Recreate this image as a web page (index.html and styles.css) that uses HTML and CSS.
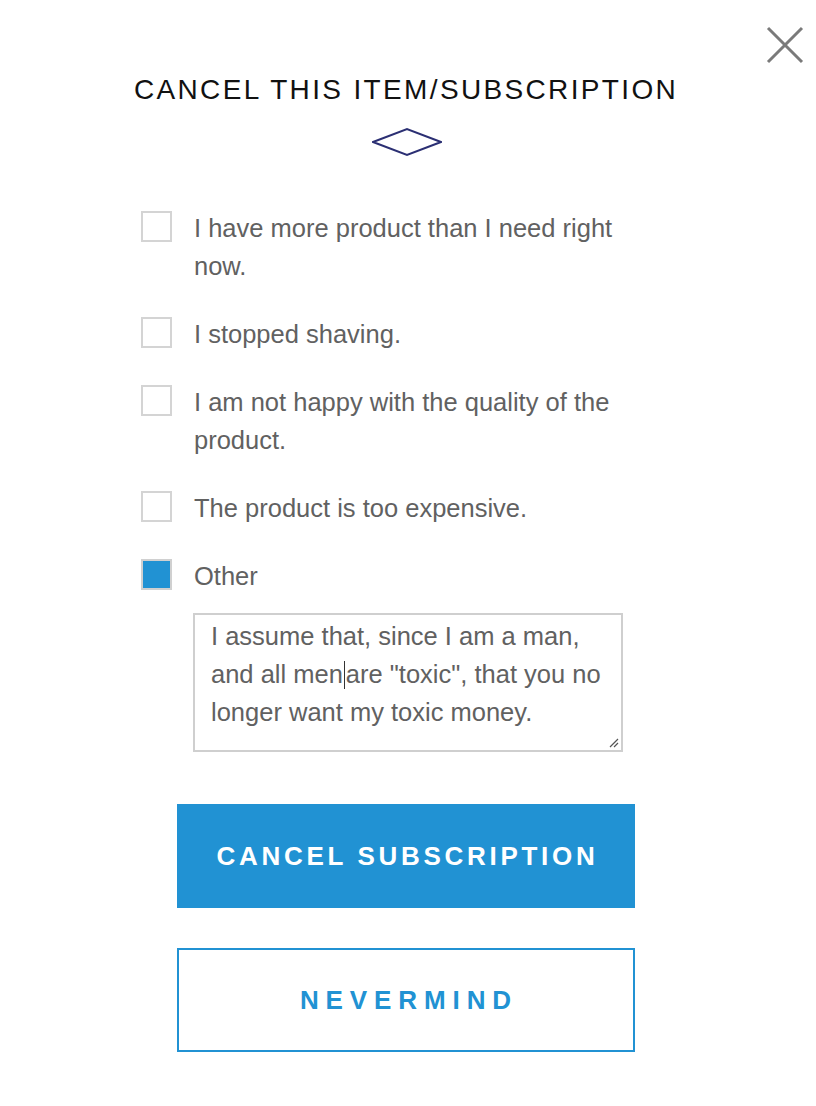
FILE: index.html
```html
<!DOCTYPE html>
<html>
<head>
<meta charset="utf-8">
<link rel="stylesheet" href="styles.css">
</head>
<body>
<div class="modal">
  <button class="close" aria-label="Close">
    <svg width="38" height="38" viewBox="0 0 38 38"><path d="M2 2 L36 36 M36 2 L2 36" stroke="#7a7a7a" stroke-width="3" fill="none"/></svg>
  </button>
  <h1 class="title">Cancel this item/subscription</h1>
  <div class="ornament">
    <svg width="70" height="30" viewBox="0 0 70 30"><path d="M1 15 L35 2 L69 15 L35 28 Z" fill="none" stroke="#2b2f73" stroke-width="2"/></svg>
  </div>
  <ul class="reasons">
    <li class="reason"><span class="box"></span><span class="label">I have more product than I need right now.</span></li>
    <li class="reason"><span class="box"></span><span class="label">I stopped shaving.</span></li>
    <li class="reason"><span class="box"></span><span class="label">I am not happy with the quality of the product.</span></li>
    <li class="reason"><span class="box"></span><span class="label">The product is too expensive.</span></li>
    <li class="reason"><span class="box checked"></span><span class="label">Other</span></li>
  </ul>
  <div class="other-text">
    <p>I assume that, since I am a man,<br>and all men<span class="caret"></span>are "toxic", that you no<br>longer want my toxic money.</p>
    <svg class="grip" width="12" height="12" viewBox="0 0 12 12"><path d="M11 3 L3 11 M11 7 L7 11" stroke="#555" stroke-width="1.2"/></svg>
  </div>
  <div class="actions">
    <button class="btn btn-primary">Cancel subscription</button>
    <button class="btn btn-outline">Nevermind</button>
  </div>
</div>
</body>
</html>
```
FILE: styles.css
```css
* { box-sizing: border-box; }
html, body { margin: 0; padding: 0; background: #fff; }
body { font-family: "Liberation Sans", Arial, sans-serif; }
.modal {
  position: relative;
  width: 816px;
  height: 1106px;
  padding-top: 74px;
  display: flex;
  flex-direction: column;
  align-items: center;
}
.close {
  position: absolute;
  top: 26px;
  right: 12px;
  padding: 0;
  border: 0;
  background: none;
  width: 38px;
  height: 38px;
}
.title {
  margin: 0 0 0 -4px;
  font-size: 28px;
  line-height: 32px;
  font-weight: normal;
  letter-spacing: 2.35px;
  text-transform: uppercase;
  color: #111;
}
.ornament {
  margin: 21px 0 0 -2px;
  height: 30px;
  line-height: 0;
}
.reasons {
  list-style: none;
  margin: 52px 0 0 -44px;
  padding: 0;
  width: 490px;
}
.reason {
  display: flex;
  gap: 22px;
  margin-bottom: 30px;
}
.reason:last-child { margin-bottom: 0; }
.box {
  flex: none;
  width: 31px;
  height: 31px;
  margin-top: 2px;
  border: 2px solid #d4d4d4;
  background: #fff;
}
.box.checked {
  background: #2192d3;
  border-color: #d0d0d0;
}
.label {
  font-size: 25.5px;
  line-height: 38px;
  color: #616161;
  max-width: 430px;
}
.other-text {
  position: relative;
  width: 430px;
  height: 139px;
  margin: 18px 0 0 0;
  border: 2px solid #cfcfcf;
  padding: 2px 4px 0 16px;
}
.other-text p {
  margin: 0;
  font-size: 25.5px;
  line-height: 38px;
  color: #616161;
  white-space: nowrap;
}
.caret {
  display: inline-block;
  width: 1px;
  height: 28px;
  background: #333;
  vertical-align: -6px;
  margin: 0 1px;
}
.grip {
  position: absolute;
  right: 2px;
  bottom: 2px;
}
.actions {
  margin: 52px 0 0 -4px;
  display: flex;
  flex-direction: column;
  gap: 40px;
}
.btn {
  width: 458px;
  height: 104px;
  font-family: "Liberation Sans", Arial, sans-serif;
  font-weight: bold;
  font-size: 26px;
  letter-spacing: 3.7px;
  text-transform: uppercase;
  cursor: pointer;
  padding: 0 0 0 3px;
}
.btn-primary {
  background: #2192d3;
  color: #fff;
  border: 0;
}
.btn-outline {
  background: #fff;
  color: #2192d3;
  border: 2px solid #2192d3;
  letter-spacing: 6.9px;
  padding-left: 6px;
}
```
